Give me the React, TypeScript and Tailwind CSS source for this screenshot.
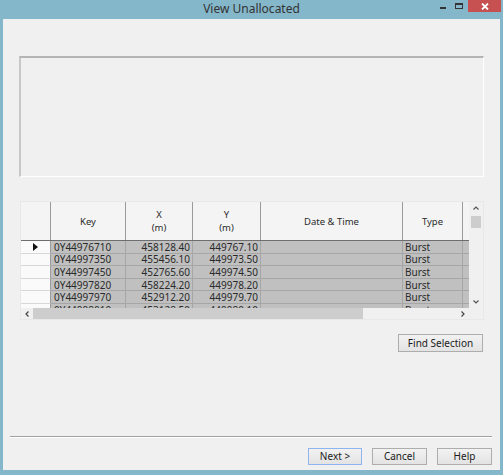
import React from 'react';

const rows = [
  { key: '0Y44976710', x: '458128.40', y: '449767.10', type: 'Burst' },
  { key: '0Y44997350', x: '455456.10', y: '449973.50', type: 'Burst' },
  { key: '0Y44997450', x: '452765.60', y: '449974.50', type: 'Burst' },
  { key: '0Y44997820', x: '458224.20', y: '449978.20', type: 'Burst' },
  { key: '0Y44997970', x: '452912.20', y: '449979.70', type: 'Burst' },
  { key: '0Y44998010', x: '453128.50', y: '449980.10', type: 'Burst' },
];

const cols = [
  { w: 'w-[75px]', label: 'Key' },
  { w: 'w-[67px]', label: 'X', unit: '(m)' },
  { w: 'w-[68px]', label: 'Y', unit: '(m)' },
  { w: 'w-[142px]', label: 'Date & Time' },
  { w: 'w-[60px]', label: 'Type' },
];

const Button: React.FC<{ label: string; className?: string; focused?: boolean }> = ({ label, className = '', focused }) => (
  <button
    className={`h-[17px] flex items-center justify-center text-[10px] text-[#1a1a1a] bg-gradient-to-b from-[#f2f2f2] to-[#e3e3e3] border ${
      focused ? 'border-[#8fb4f0]' : 'border-[#adadad]'
    } ${className}`}
  >
    {label}
  </button>
);

export default function App() {
  return (
    <div
      className="w-[503px] h-[475px] bg-[#85b7ca] flex flex-col overflow-hidden"
      style={{ fontFamily: '"Noto Sans", "Open Sans", sans-serif' }}
    >
      {/* title bar */}
      <div className="relative h-[19px] shrink-0 flex items-center justify-center">
        <span className="text-[12px] text-[#333] leading-none pb-[2px]">View Unallocated</span>
        <div className="absolute right-[2px] top-0 flex items-start">
          <div className="w-[18px] h-[12px] flex items-center justify-center">
            <div className="w-[6px] h-[2px] bg-[#333] mt-[4px]" />
          </div>
          <div className="w-[14px] h-[12px] flex items-center justify-center">
            <div className="w-[8px] h-[6px] border border-[#333] border-t-2" />
          </div>
          <div className="ml-[2px] w-[33px] h-[12px] bg-[#c75050] flex items-center justify-center">
            <svg width="8" height="7" viewBox="0 0 8 7">
              <path d="M1 0.5 L7 6.5 M7 0.5 L1 6.5" stroke="white" strokeWidth="1.8" />
            </svg>
          </div>
        </div>
      </div>

      {/* client area */}
      <div className="flex-1 mx-[3px] mb-[5px] bg-[#f0f0f0] flex flex-col">
        {/* sunken panel */}
        <div className="mt-[37px] ml-[16px] mr-[16px] h-[121px] border-t-2 border-l-2 border-t-[#b4b4b4] border-l-[#c8c8c8] border-r border-b border-r-white border-b-white" />

        {/* data grid */}
        <div className="mt-[24px] ml-[17px] mr-[16px] h-[119px] bg-[#f0f0f0] border border-[#e8e8e8] flex flex-col text-[10px] text-[#2a2a2a]">
          <div className="flex flex-1 min-h-0">
            <div className="flex-1 flex flex-col overflow-hidden">
              {/* header */}
              <div className="h-[39px] shrink-0 flex border-b border-b-[#6e6e6e]">
                <div className="w-[30px] shrink-0 border-r border-r-[#9a9a9a] bg-[#f4f4f4]" />
                {cols.map((c) => (
                  <div
                    key={c.label}
                    className={`${c.w} shrink-0 border-r border-r-[#9a9a9a] bg-[#f4f4f4] flex flex-col items-center justify-center leading-[13px] text-[9.5px]`}
                  >
                    <span>{c.label}</span>
                    {c.unit && <span>{c.unit}</span>}
                  </div>
                ))}
                <div className="w-[8px] shrink-0 bg-[#f4f4f4]" />
              </div>
              {/* rows */}
              {rows.map((r, i) => (
                <div key={r.key} className="h-[12.6px] shrink-0 flex">
                  <div className="w-[30px] shrink-0 bg-[#fafafa] border-b border-b-[#d8d8d8] border-r border-r-[#9a9a9a] flex items-center justify-center">
                    {i === 0 && (
                      <svg width="5" height="8" viewBox="0 0 5 8">
                        <path d="M0 0 L5 4 L0 8 Z" fill="#111" />
                      </svg>
                    )}
                  </div>
                  <div className="w-[75px] shrink-0 bg-[#c0c0c0] border-r border-b border-[#a6a6a6] flex items-center pl-[3px] leading-none">
                    {r.key}
                  </div>
                  <div className="w-[67px] shrink-0 bg-[#c0c0c0] border-r border-b border-[#a6a6a6] flex items-center justify-end pr-[2px] leading-none">
                    {r.x}
                  </div>
                  <div className="w-[68px] shrink-0 bg-[#c0c0c0] border-r border-b border-[#a6a6a6] flex items-center justify-end pr-[2px] leading-none">
                    {r.y}
                  </div>
                  <div className="w-[142px] shrink-0 bg-[#c0c0c0] border-r border-b border-[#a6a6a6]" />
                  <div className="w-[60px] shrink-0 bg-[#c0c0c0] border-r border-b border-[#a6a6a6] flex items-center pl-[2px] leading-none">
                    {r.type}
                  </div>
                  <div className="w-[8px] shrink-0 bg-[#c0c0c0] border-b border-[#a6a6a6]" />
                </div>
              ))}
            </div>
            {/* vertical scrollbar */}
            <div className="w-[14px] shrink-0 bg-[#f0f0f0] flex flex-col items-center">
              <div className="h-[12px] w-full flex items-center justify-center">
                <svg width="6" height="4" viewBox="0 0 6 4">
                  <path d="M0.5 3.5 L3 1 L5.5 3.5" stroke="#555" strokeWidth="1.2" fill="none" />
                </svg>
              </div>
              <div className="mt-[2px] w-[10px] h-[12px] bg-[#cdcdcd]" />
              <div className="flex-1" />
              <div className="h-[12px] w-full flex items-center justify-center">
                <svg width="6" height="4" viewBox="0 0 6 4">
                  <path d="M0.5 0.5 L3 3 L5.5 0.5" stroke="#555" strokeWidth="1.2" fill="none" />
                </svg>
              </div>
            </div>
          </div>
          {/* horizontal scrollbar */}
          <div className="h-[11px] shrink-0 flex bg-[#f0f0f0]">
            <div className="w-[12px] flex items-center justify-center">
              <svg width="4" height="6" viewBox="0 0 4 6">
                <path d="M3.5 0.5 L1 3 L3.5 5.5" stroke="#444" strokeWidth="1.2" fill="none" />
              </svg>
            </div>
            <div className="w-[330px] bg-[#cdcdcd]" />
            <div className="flex-1" />
            <div className="w-[12px] flex items-center justify-center">
              <svg width="4" height="6" viewBox="0 0 4 6">
                <path d="M0.5 0.5 L3 3 L0.5 5.5" stroke="#444" strokeWidth="1.2" fill="none" />
              </svg>
            </div>
            <div className="w-[14px]" />
          </div>
        </div>

        <div className="mt-[14px] mr-[17px] self-end">
          <Button label="Find Selection" className="w-[85px] h-[18px]" />
        </div>

        <div className="flex-1" />

        <div className="ml-[7px] mr-[8px] h-px bg-[#a0a0a0] border-b border-b-white box-content" />

        <div className="mt-[10px] mb-[5px] mr-[8px] flex justify-end gap-[10px]">
          <Button label="Next >" className="w-[54px]" focused />
          <Button label="Cancel" className="w-[55px]" />
          <Button label="Help" className="w-[55px]" />
        </div>
      </div>
    </div>
  );
}
